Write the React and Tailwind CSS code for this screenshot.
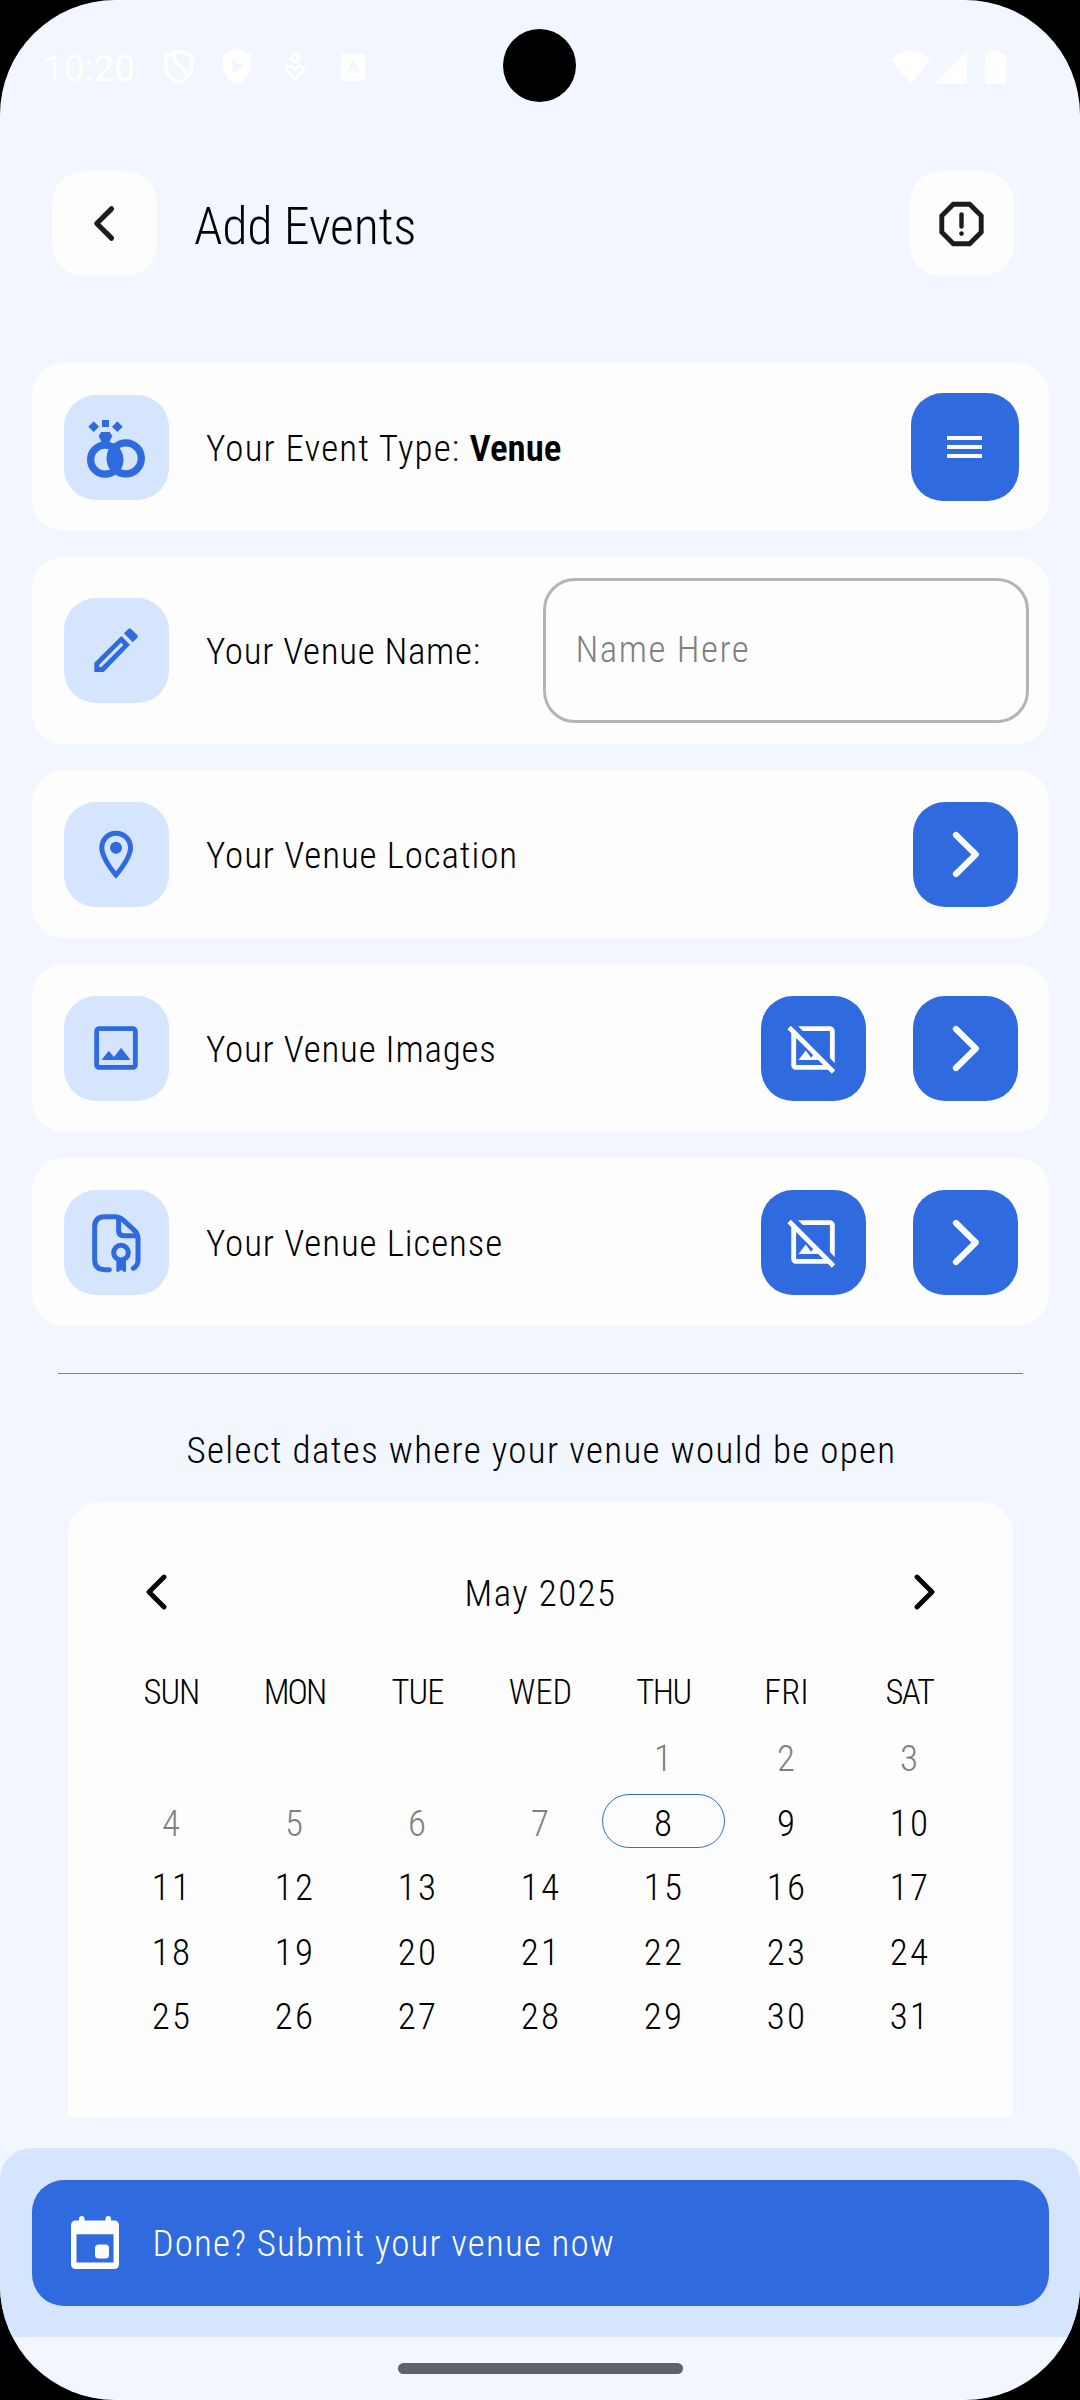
import React from "react";
import { MdOutlineHideImage, MdOutlineImage } from "react-icons/md";

const TILE = "flex h-[105px] w-[105px] shrink-0 items-center justify-center rounded-[32px]";

function StatusBar() {
  return (
    <div className="relative flex h-[134px] shrink-0 items-center pl-[43px] pr-[74px] text-white">
      <span className="w-[92px] pt-[3px] text-[37px] leading-[44px]">10:20</span>
      <svg className="ml-[29px]" width="30" height="36" viewBox="0 0 30 36" fill="none" stroke="#fff" strokeWidth="3.600" strokeLinejoin="round">
        <path d="M15 2 L28 7 V17 C28 25 22 31 15 34 C8 31 2 25 2 17 V7 Z" />
        <path d="M10 4 C8 18 22 16 22.500 28" />
      </svg>
      <svg className="ml-[28px]" width="30" height="36" viewBox="0 0 30 36">
        <path fill="#fff" fillRule="evenodd" d="M15 0 L29 5.500 V16 C29 25 23 33 15 36 C7 33 1 25 1 16 V5.500 Z M10.500 10.500 V24 L21.500 17.200 Z" />
      </svg>
      <svg className="ml-[32px]" width="22" height="28" viewBox="0 0 22 28" fill="none" stroke="#fff" strokeWidth="3">
        <circle cx="11" cy="5" r="3.600" />
        <path strokeLinejoin="round" d="M11 26 L3.500 18.500 C0 14 6 10 11 16.500 C16 10 22 14 18.500 18.500 Z" />
      </svg>
      <svg className="ml-[35px]" width="24" height="27" viewBox="0 0 24 27">
        <rect width="24" height="27" rx="2.500" fill="#fff" />
        <path d="M7.500 19 L12 7.500 L16.500 19 M9 15.500 H15" fill="none" stroke="#f2f6ff" strokeWidth="2.600" />
        <path d="M13 24 H15 M17 24 H19 M20.500 24 H22.500" stroke="#f2f6ff" strokeWidth="2" />
      </svg>
      <div className="absolute left-[503px] top-[29px] h-[73px] w-[73px] rounded-full bg-black" />
      <svg className="ml-auto" width="39" height="33" viewBox="0 0 39 33">
        <path fill="#fff" d="M19.500 33 L0 9 C11 -3 28 -3 39 9 Z" />
      </svg>
      <svg className="ml-[4px]" width="33" height="33" viewBox="0 0 33 33">
        <path fill="#fff" d="M33 0 V33 H0 Z" />
      </svg>
      <svg className="ml-[18px]" width="21" height="34" viewBox="0 0 21 34">
        <path fill="#fff" d="M6 0 H15 V3.500 H19 Q21 3.500 21 5.500 V32 Q21 34 19 34 H2 Q0 34 0 32 V5.500 Q0 3.500 2 3.500 H6 Z" />
      </svg>
    </div>
  );
}

function Header() {
  return (
    <header className="mt-[37px] flex h-[105px] shrink-0 items-center pl-[52px] pr-[66px]">
      <button className={`${TILE} bg-[#fdfdfd]`}>
        <svg width="105" height="105" viewBox="0 0 105 105" fill="none" stroke="#1d1b20" strokeWidth="5.200" strokeLinecap="round" strokeLinejoin="round">
          <path d="M59.500 37.800 L44.800 52.500 L59.500 67.200" />
        </svg>
      </button>
      <h1 className="ml-[37px] pt-[7px] text-[52px] font-light leading-[62px] tracking-[-0.3px]">Add Events</h1>
      <button className={`${TILE} ml-auto bg-[#fdfdfd]`}>
        <svg width="105" height="105" viewBox="0 0 105 105" fill="none" stroke="#1d1b20" strokeWidth="4.900">
          <path d="M44.300 33.300 H60.700 L72.200 44.800 V61.200 L60.700 72.700 H44.300 L32.800 61.200 V44.800 Z" />
          <path d="M52.500 43.500 V55.500" strokeWidth="4.400" strokeLinecap="round" />
          <circle cx="52.500" cy="62.600" r="2.300" fill="#1d1b20" stroke="none" />
        </svg>
      </button>
    </header>
  );
}

function RingsIcon() {
  return (
    <svg width="105" height="105" viewBox="0 -3 315 315" fill="#2f6bde">
      <circle cx="123.500" cy="191" r="43.500" fill="none" stroke="#2f6bde" strokeWidth="22" />
      <circle cx="185.500" cy="187" r="46.500" fill="none" stroke="#2f6bde" strokeWidth="22" />
      <path d="M148.700 142.700 A54.500 54.500 0 0 1 154.700 235.700 A57.500 57.500 0 0 1 148.700 142.700 Z" />
      <path d="M112 108 H137 L145 120 L134 142 H114 L104 120 Z" />
      <path d="M114 72 H135 V93 H114 Z M89 76 L105 92 L89 108 L73 92 Z M160 76 L176 92 L160 108 L144 92 Z" />
    </svg>
  );
}

function PencilIcon() {
  return (
    <svg width="105" height="105" viewBox="0 609 315 315" fill="#2f6bde">
      <path fillRule="evenodd" d="M91 831 V803 L172 723 L198 749 L119 831 Z M106 816 H112 L178 750 L171 743 L106 809 Z" />
      <path d="M180 715 L193 702 Q197 698 201 702 L220 720 Q223 723 220 728 L206 742 Z" />
    </svg>
  );
}

function PinIcon() {
  return (
    <svg width="105" height="105" viewBox="0 4 315 315" fill="#2f6bde">
      <path fillRule="evenodd" d="M156 90 C128 90 106 112 106 141 C106 179 156 234 156 234 C156 234 207 179 207 141 C207 112 185 90 156 90 Z M121 141 C121 121 137 105 156 105 C176 105 192 121 192 141 C192 162 171 193 156 212 C141 193 121 161 121 141 Z" />
      <circle cx="156" cy="141" r="18" />
    </svg>
  );
}

function LicenseIcon() {
  return (
    <svg width="105" height="105" viewBox="0 1169 315 315" fill="none" stroke="#2f6bde" strokeWidth="15" strokeLinecap="round">
      <path d="M136 1408 H122 Q92 1408 92 1378 V1279 Q92 1249 122 1249 H153 Q166 1249 176 1258 L211 1290 Q222 1301 222 1315 V1378 Q222 1396 208 1404" />
      <path d="M164 1252 V1292 Q164 1306 178 1306 H220" />
      <circle cx="171" cy="1357" r="22" />
      <path d="M157 1378 H186 V1412 Q182 1418 176 1411 L171.500 1409 L167 1411 Q161 1418 157 1412 Z" fill="#2f6bde" stroke="none" />
    </svg>
  );
}

function Row({ icon, label, tall, children }) {
  return (
    <div className={`flex items-center rounded-[32px] bg-[#fdfdfd] pl-[32px] ${tall ? "h-[187px] pr-[20px]" : "h-[168px] pr-[31px]"}`}>
      <div className={`${TILE} bg-[#d6e5fe] text-[#2f6bde]`}>{icon}</div>
      <div className="ml-[37.500px] whitespace-nowrap pt-[3px] text-[37px] font-light leading-[46px]">{label}</div>
      <div className="ml-auto flex items-center gap-[47px]">{children}</div>
    </div>
  );
}

function NextButton() {
  return (
    <button className={`${TILE} bg-[#2f6bde]`}>
      <svg width="105" height="105" viewBox="0 0 105 105" fill="none" stroke="#fdfdfd" strokeWidth="6.200" strokeLinecap="round" strokeLinejoin="round">
        <path d="M43 33 L62.800 52.500 L43 72" />
      </svg>
    </button>
  );
}

function NoImageButton() {
  return (
    <button className={`${TILE} bg-[#2f6bde] text-[#fdfdfd]`}>
      <MdOutlineHideImage size={58} />
    </button>
  );
}

const WEEKDAYS = [
  ["SUN", "tracking-[-1px]"],
  ["MON", "tracking-[-2px]"],
  ["TUE", "tracking-[-1px]"],
  ["WED", "tracking-[0px]"],
  ["THU", "tracking-[-1.5px]"],
  ["FRI", "tracking-[0px]"],
  ["SAT", "tracking-[-1.5px]"],
];

const DAYS = [null, null, null, null, ...Array.from({ length: 31 }, (_, i) => i + 1)];
const TODAY = 8;

function CalendarChevron({ flip }) {
  return (
    <svg width="21" height="36" viewBox="0 0 21 36" fill="none" stroke="#000" strokeWidth="4.800" strokeLinecap="round" strokeLinejoin="round">
      <path d={flip ? "M3 3 L18 18 L3 33" : "M18 3 L3 18 L18 33"} />
    </svg>
  );
}

function Calendar() {
  return (
    <section className="ml-[68px] mr-[67px] mt-[23px] h-[615px] shrink-0 rounded-t-[32px] bg-[#fdfdfd] px-[42px] pt-[60px] font-light">
      <div className="flex h-[60px] items-center justify-between px-[36px]">
        <CalendarChevron />
        <span className="pt-[3px] text-[37px] leading-[46px] tracking-[1.4px]">May 2025</span>
        <CalendarChevron flip />
      </div>
      <div className="mt-[45px] grid h-[50px] grid-cols-7 items-center text-center text-[34.5px] leading-[50px]">
        {WEEKDAYS.map(([d, tracking]) => (
          <span key={d} className={tracking}>{d}</span>
        ))}
      </div>
      <div className="mt-[10px] grid auto-rows-[64.4px] grid-cols-7 text-[37px] tracking-[2.2px]">
        {DAYS.map((d, i) => (
          <div key={i} className={`relative flex items-center justify-center pl-[1px] ${d && d < TODAY ? "text-[#808080]" : "text-black"}`}>
            {d === TODAY && <div className="absolute inset-x-0 top-[3px] h-[54px] rounded-full border border-[#2f6bde]" />}
            {d}
          </div>
        ))}
      </div>
    </section>
  );
}

function SubmitBar() {
  return (
    <div className="mt-[31px] h-[189px] shrink-0 rounded-t-[32px] bg-[#d6e5fe] p-[31.500px]">
      <button className="flex h-[126px] w-full items-center rounded-[32px] bg-[#2f6bde] pl-[39px] text-white">
        <svg width="48" height="53" viewBox="0 0 48 53" fill="#fdfdfd">
          <path fillRule="evenodd" d="M5 4.500 H43 Q48 4.500 48 9.500 V48 Q48 53 43 53 H5 Q0 53 0 48 V9.500 Q0 4.500 5 4.500 Z M5.500 18.200 V46.500 H42.500 V18.200 Z" />
          <rect x="8" y="0" width="5.500" height="9" rx="2.700" />
          <rect x="34.500" y="0" width="5.500" height="9" rx="2.700" />
          <rect x="24" y="28.500" width="14" height="14" rx="3.500" />
        </svg>
        <span className="ml-[34px] pt-[3px] text-[37px] font-light leading-[46px] tracking-[1.15px]">Done? Submit your venue now</span>
      </button>
    </div>
  );
}

export default function App() {
  return (
    <div className="h-[2400px] w-[1080px] bg-black">
      <div className="flex h-full flex-col overflow-hidden rounded-[115px] bg-[#f2f6ff] font-['Roboto',sans-serif] text-black">
        <StatusBar />
        <main className="flex flex-col [font-stretch:75%]">
          <Header />
          <div className="mt-[87px] flex flex-col gap-[26px] px-[31.500px]">
            <Row
              icon={<RingsIcon />}
              label={<><span className="tracking-[1.15px]">Your Event Type:</span><span className="ml-[9px] font-semibold">Venue</span></>}
            >
              <button className="-mr-[1px] flex h-[108px] w-[108px] flex-col items-center justify-center gap-[5px] rounded-[32px] bg-[#2f6bde]">
                <span className="h-[4px] w-[35px] bg-[#fdfdfd]" />
                <span className="h-[4px] w-[35px] bg-[#fdfdfd]" />
                <span className="h-[4px] w-[35px] bg-[#fdfdfd]" />
              </button>
            </Row>
            <Row tall icon={<PencilIcon />} label={<span className="tracking-[0.7px]">Your Venue Name:</span>}>
              <input
                placeholder="Name Here"
                className="h-[145px] w-[486px] rounded-[32px] border-[3px] border-[#b4b4b4] bg-transparent pb-[2px] pl-[30px] text-[37px] font-light tracking-[1.5px] [font-stretch:75%] placeholder:text-[#808080]"
              />
            </Row>
            <Row icon={<PinIcon />} label={<span className="tracking-[0.9px]">Your Venue Location</span>}>
              <NextButton />
            </Row>
            <Row icon={<MdOutlineImage size={58} />} label={<span className="tracking-[0.8px]">Your Venue Images</span>}>
              <NoImageButton />
              <NextButton />
            </Row>
            <Row icon={<LicenseIcon />} label={<span className="tracking-[0.9px]">Your Venue License</span>}>
              <NoImageButton />
              <NextButton />
            </Row>
          </div>
          <div className="ml-[58px] mr-[57px] mt-[47px] h-px bg-[#7f8289]" />
          <p className="mt-[48px] h-[57px] pl-[3px] text-center text-[37px] font-light leading-[58px] tracking-[1.34px]">
            Select dates where your venue would be open
          </p>
          <Calendar />
          <SubmitBar />
        </main>
        <div className="flex flex-1 items-center justify-center">
          <div className="h-[11px] w-[285px] rounded-full bg-[#626266]" />
        </div>
      </div>
    </div>
  );
}
